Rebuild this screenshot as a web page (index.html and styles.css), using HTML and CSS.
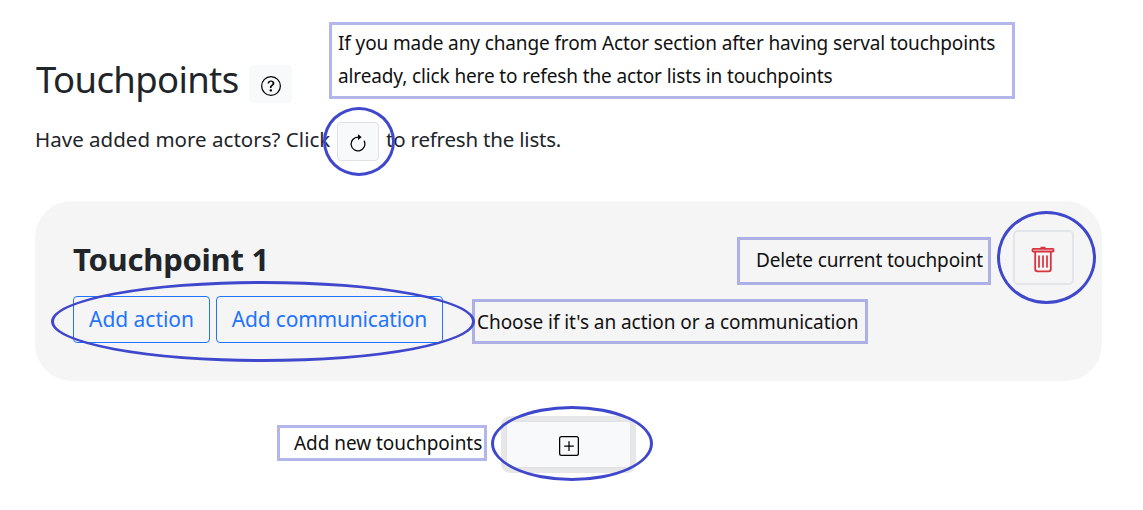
FILE: index.html
```html
<!DOCTYPE html>
<html lang="en">
<head>
<meta charset="utf-8">
<title>Touchpoints</title>
<link rel="stylesheet" href="styles.css">
</head>
<body>
<main class="page">
  <header class="heading">
    <h1 class="title">Touchpoints</h1>
    <button class="btn-help" aria-label="Help">
      <svg width="20" height="20" viewBox="0 0 16 16" fill="currentColor"><path d="M8 15A7 7 0 1 1 8 1a7 7 0 0 1 0 14m0 1A8 8 0 1 0 8 0a8 8 0 0 0 0 16"/><path d="M5.255 5.786a.237.237 0 0 0 .241.247h.825c.138 0 .248-.113.266-.25.09-.656.54-1.134 1.342-1.134.686 0 1.314.343 1.314 1.168 0 .635-.374.927-.965 1.371-.673.489-1.206 1.06-1.168 1.987l.003.217a.25.25 0 0 0 .25.246h.811a.25.25 0 0 0 .25-.25v-.105c0-.718.273-.927 1.01-1.486.609-.463 1.244-.977 1.244-2.056 0-1.511-1.276-2.241-2.673-2.241-1.267 0-2.655.59-2.75 2.286m1.557 5.763c0 .533.425.927 1.01.927.609 0 1.028-.394 1.028-.927 0-.552-.42-.94-1.029-.94-.584 0-1.009.388-1.009.94"/></svg>
    </button>
  </header>
  <div class="refresh-row">
    <span class="lead lead-before">Have added more actors? Click</span>
    <button class="btn-refresh" aria-label="Refresh">
      <svg width="20" height="20" viewBox="0 0 16 16" fill="currentColor"><path fill-rule="evenodd" d="M8 3a5 5 0 1 0 4.546 2.914.5.5 0 0 1 .908-.417A6 6 0 1 1 8 2z"/><path d="M8 4.466V.534a.25.25 0 0 1 .41-.192l2.36 1.966c.12.1.12.284 0 .384L8.41 4.658A.25.25 0 0 1 8 4.466"/></svg>
    </button>
    <span class="lead lead-after">to refresh the lists.</span>
  </div>
  <section class="card">
    <div class="card-main">
      <h2 class="card-title">Touchpoint 1</h2>
      <div class="actions">
        <button class="btn-outline btn-action">Add action</button>
        <button class="btn-outline btn-comm">Add communication</button>
      </div>
    </div>
    <button class="btn-delete" aria-label="Delete">
      <svg width="24" height="27" viewBox="0 0 24 27" fill="none" stroke="currentColor"><path stroke-width="1.8" d="M9.500 1.600h5M2.200 2.800h19.600q.7 0 .7.700v1.300q0 .7-.7.700H2.200q-.7 0-.7-.700V3.500q0-.7.700-.700zM4.200 5.700v17.300q0 2.300 2.300 2.300h11q2.300 0 2.300-2.300V5.700"/><path stroke-width="1.700" stroke-linecap="round" d="M8 10v11M12 10v11M16 10v11"/></svg>
    </button>
  </section>
  <div class="add-row">
    <button class="btn-add" aria-label="Add touchpoint">
      <svg width="20" height="20" viewBox="0 0 16 16" fill="currentColor"><path d="M14 1a1 1 0 0 1 1 1v12a1 1 0 0 1-1 1H2a1 1 0 0 1-1-1V2a1 1 0 0 1 1-1zM2 0a2 2 0 0 0-2 2v12a2 2 0 0 0 2 2h12a2 2 0 0 0 2-2V2a2 2 0 0 0-2-2z"/><path d="M8 4a.5.5 0 0 1 .5.5v3h3a.5.5 0 0 1 0 1h-3v3a.5.5 0 0 1-1 0v-3h-3a.5.5 0 0 1 0-1h3v-3A.5.5 0 0 1 8 4"/></svg>
    </button>
  </div>

  <div class="note note-refresh"><span class="line">If you made any change from Actor section after having serval touchpoints</span><span class="line">already, click here to refesh the actor lists in touchpoints</span></div>
  <div class="note note-delete"><span class="line">Delete current touchpoint</span></div>
  <div class="note note-choose"><span class="line">Choose if it's an action or a communication</span></div>
  <div class="note note-add"><span class="line">Add new touchpoints</span></div>
  <div class="ring ring-refresh"></div>
  <div class="ring ring-delete"></div>
  <div class="ring ring-actions"></div>
  <div class="ring ring-add"></div>
</main>
</body>
</html>
```
FILE: styles.css
```css
* { box-sizing: border-box; }
body { margin: 0; background: #fff; color: #212529; font-family: "Noto Sans", sans-serif; }
button { display: flex; align-items: center; justify-content: center; padding: 0; font: inherit; color: #000; flex: none; }
svg { display: block; }
.page { position: relative; width: 1143px; height: 510px; padding: 58px 41px 0 35px; overflow: hidden; white-space: nowrap; }

.heading { display: flex; height: 45px; }
.title { width: 214px; margin: 0; padding-left: 1px; font-size: 36.5px; line-height: 43px; font-weight: 400; letter-spacing: -0.65px; }
.btn-help { width: 43px; height: 38px; margin-top: 7px; padding-top: 4px; border: 0; border-radius: 4px; background: #f8f9fa; }

.refresh-row { display: flex; height: 39px; margin-top: 19px; }
.lead { font-size: 20.5px; line-height: 35px; }
.lead-before { width: 302px; letter-spacing: 0.02px; }
.lead-after { margin-left: 7px; letter-spacing: -0.2px; }
.btn-refresh { width: 42px; height: 39px; padding-top: 4px; border: 1px solid #dee2e6; border-radius: 4px; background: #f8f9fa; }

.card { display: flex; justify-content: space-between; height: 180px; margin-top: 40px; padding: 29px 28px 0 38px; border-radius: 37px; background: #f5f5f5; }
.card-title { height: 60px; margin: 0; font-size: 31px; line-height: 58px; font-weight: 700; letter-spacing: -0.25px; }
.actions { display: flex; gap: 6px; margin-top: 6px; }
.btn-outline { height: 47px; padding-bottom: 2px; border: 1px solid #1f75ff; border-radius: 4px; background: transparent; color: #2374ff; font-size: 21px; letter-spacing: -0.2px; }
.btn-action { width: 137px; letter-spacing: -0.05px; }
.btn-comm { width: 227px; }
.btn-delete { width: 61px; height: 55px; padding: 4px 2px 0 0; border: 2px solid #e2e6ea; border-radius: 5px; background: transparent; color: #d6343f; }

.add-row { display: flex; margin: 35px 0 0 466px; }
.btn-add { width: 135px; height: 57px; padding-top: 2px; border: 5px solid #e7e7e7; border-radius: 9px; background: #f8f9fa; box-shadow: inset 0 0 0 1px #e0e2e5; }

.note { position: absolute; border: 3px solid rgba(63, 72, 204, 0.4); color: #111; font-size: 19px; line-height: 33px; }
.line { display: block; }
.note-refresh { left: 329px; top: 22px; width: 686px; height: 77px; padding: 2px 0 0 6px; letter-spacing: -0.12px; }
.note-delete { left: 737px; top: 237px; width: 254px; height: 48px; padding: 4px 0 0 16px; letter-spacing: -0.15px; }
.note-choose { left: 472px; top: 299px; width: 396px; height: 45px; padding: 4px 0 0 2px; letter-spacing: -0.06px; }
.note-add { left: 277px; top: 425px; width: 210px; height: 36px; padding: 0 0 0 14px; line-height: 31px; letter-spacing: -0.05px; }

.ring { position: absolute; border: 3px solid #3f48cc; border-radius: 50%; }
.ring-refresh { left: 323px; top: 107px; width: 72px; height: 69px; }
.ring-delete { left: 997px; top: 211px; width: 99px; height: 93px; }
.ring-actions { left: 51px; top: 281px; width: 424px; height: 81px; }
.ring-add { left: 491px; top: 406px; width: 162px; height: 75px; }
```
